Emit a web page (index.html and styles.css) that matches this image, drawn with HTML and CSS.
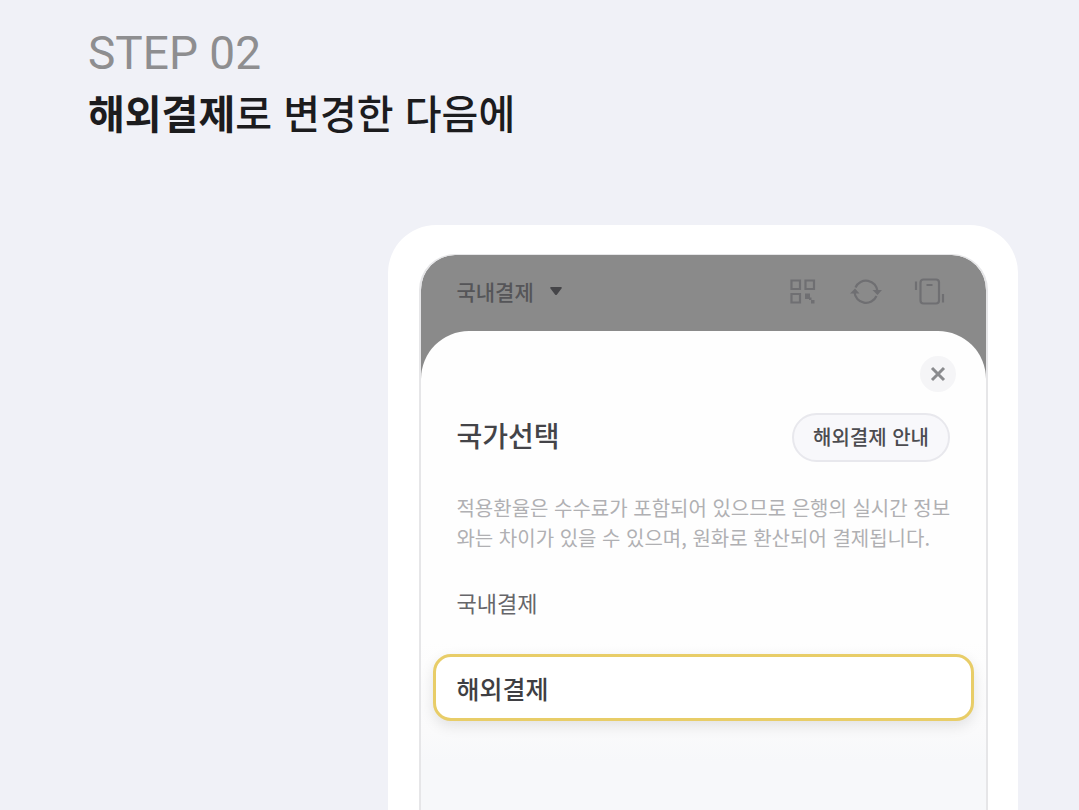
FILE: index.html
```html
<!DOCTYPE html>
<html lang="ko">
<head>
<meta charset="utf-8">
<meta name="viewport" content="width=device-width, initial-scale=1">
<title>해외결제로 변경한 다음에</title>
<link rel="stylesheet" href="styles.css">
</head>
<body>
<main class="page">
  <header class="intro">
    <p class="step">STEP 02</p>
    <h1 class="headline"><strong>해외결제</strong>로 변경한 다음에</h1>
  </header>
  <section class="phone">
    <div class="screen">
      <div class="topbar">
        <button class="region" type="button">국내결제
          <svg width="14" height="10" viewBox="0 0 14 10" aria-hidden="true"><path d="M2 1H12Q13.500 1 12.500 2.500L8 8.500Q7 9.500 6 8.500L1.500 2.500Q.5 1 2 1Z" fill="#454548"/></svg>
        </button>
        <div class="tools">
          <button class="tool" type="button" aria-label="QR 코드">
            <svg width="32" height="32" viewBox="0 0 32 32" fill="none" stroke="#6f6f72" stroke-width="2.200"><path d="M5.500 5.500h8.500v8.500H5.500zM19.500 5.500H28v8.500h-8.500zM5.500 19H14v8.500H5.500z"/><path d="M19 18.500h5v5.500h-5zM23 22.500h2.500v2.500H23zM25 25h3.500v3.500H25z" fill="#6f6f72" stroke="none"/></svg>
          </button>
          <button class="tool" type="button" aria-label="새로고침">
            <svg width="32" height="32" viewBox="0 0 32 32" fill="none" stroke="#6f6f72" stroke-width="2.200"><path d="M5.500 12.500A11.500 11.500 0 0 1 27.500 16.500M26.500 21A11.500 11.500 0 0 1 4.500 17"/><path d="M22.500 15h9.500l-4.500 5zM0 18.500h9.500L5 13.500z" fill="#6f6f72" stroke="none"/></svg>
          </button>
          <button class="tool" type="button" aria-label="흔들어 열기">
            <svg width="32" height="32" viewBox="0 0 32 32" fill="none" stroke="#6f6f72" stroke-width="2.200"><rect x="6.500" y="4.500" width="18.500" height="24" rx="3"/><path d="M12.500 10h6M2 6.500v8.500M29 19v8.500"/></svg>
          </button>
        </div>
      </div>
      <div class="sheet">
        <div class="close-row">
          <button class="close" type="button" aria-label="닫기">
            <svg width="16" height="16" viewBox="0 0 16 16" fill="none" stroke="#8a8b8e" stroke-width="3"><path d="M2 2l12 12M14 2L2 14"/></svg>
          </button>
        </div>
        <div class="title-row">
          <h2 class="title">국가선택</h2>
          <button class="guide" type="button">해외결제 안내</button>
        </div>
        <p class="note">적용환율은 수수료가 포함되어 있으므로 은행의 실시간 정보와는 차이가 있을 수 있으며, 원화로 환산되어 결제됩니다.</p>
        <button class="option" type="button">국내결제</button>
        <div class="choice"><button class="option selected" type="button">해외결제</button></div>
      </div>
    </div>
  </section>
</main>
</body>
</html>
```
FILE: styles.css
```css
* { box-sizing: border-box; }

body {
  margin: 0;
  background: #f0f1f7;
  color: #1c1c1e;
  font-family: "Noto Sans CJK KR", sans-serif;
}

h1, h2, p { margin: 0; }

button {
  padding: 0;
  border: 0;
  background: none;
  color: inherit;
  font: inherit;
  cursor: pointer;
}

svg { display: block; }

.page {
  display: flex;
  flex-direction: column;
  min-height: 100vh;
}

.intro { padding: 24px 88px 0; }

.step {
  color: #8e8e90;
  font-family: Roboto, sans-serif;
  font-size: 46px;
  font-weight: 400;
  line-height: 58px;
}

.headline {
  font-size: 40px;
  font-weight: 500;
  line-height: 60px;
}

.headline strong { font-weight: 700; }

.phone {
  display: flex;
  flex: 1;
  margin: 83px 61px 0 36%;
  padding: 29px 30px 0 31px;
  border-radius: 48px 48px 0 0;
  background: #fff;
}

.screen {
  display: flex;
  flex: 1;
  flex-direction: column;
  overflow: hidden;
  border: 2px solid #e6e6e8;
  border-top-width: 1px;
  border-bottom: 0;
  border-radius: 36px 36px 0 0;
  background: linear-gradient(#8a8a8a 200px, #f7f8fa 200px) padding-box;
}

.topbar {
  display: flex;
  align-items: center;
  justify-content: space-between;
  height: 76px;
  padding: 0 40px 4px 35px;
}

.region {
  display: flex;
  align-items: center;
  gap: 15px;
  color: #555558;
  font-size: 21px;
  font-weight: 500;
}

.tools { display: flex; gap: 32px; }

.sheet {
  flex: 1;
  border-radius: 48px 48px 0 0;
  background: linear-gradient(#fefefe 310px, #fafafb 400px, #f7f8fa 430px);
}

.close-row {
  display: flex;
  justify-content: flex-end;
  padding: 25px 30px 0;
}

.close {
  display: grid;
  place-items: center;
  width: 36px;
  height: 36px;
  border-radius: 50%;
  background: #f5f5f7;
}

.title-row {
  display: flex;
  align-items: flex-start;
  justify-content: space-between;
  padding: 21px 36px 0 35px;
}

.title {
  color: #444448;
  font-size: 28px;
  font-weight: 500;
  line-height: 44px;
}

.guide {
  height: 49px;
  padding: 0 19px 2px;
  border: 2px solid #e8e8ed;
  border-radius: 25px;
  background: #f8f8fb;
  color: #4c4c50;
  font-size: 20px;
  font-weight: 500;
}

.note {
  padding: 31px 28px 0 35px;
  color: #b0b0b3;
  font-size: 20px;
  line-height: 30px;
  word-break: break-all;
}

.option {
  display: block;
  width: 100%;
  height: 101px;
  padding: 0 35px 3px;
  color: #66666a;
  font-size: 22px;
  text-align: left;
}

.choice { padding: 0 12px; }

.selected {
  height: 67px;
  padding: 0 20px;
  border: 3px solid #e8cd68;
  border-radius: 18px;
  background: #fff;
  box-shadow: 0 5px 14px rgba(0, 0, 0, 0.1);
  color: #3f3f43;
  font-size: 25px;
  font-weight: 500;
}
```
